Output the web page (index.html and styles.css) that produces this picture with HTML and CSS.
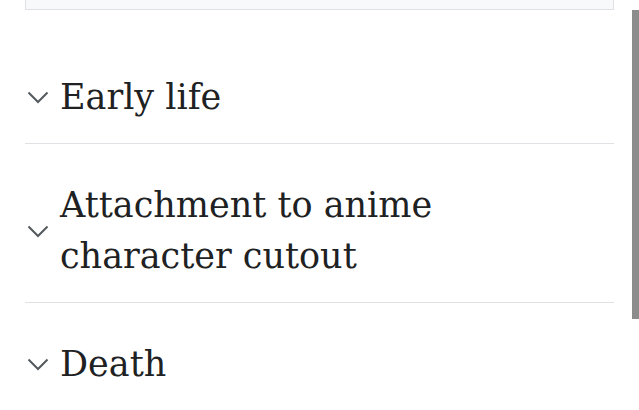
FILE: index.html
```html
<!DOCTYPE html>
<html lang="en">
<head>
<meta charset="utf-8">
<link rel="stylesheet" href="styles.css">
</head>
<body>
<div class="page">
  <div class="infobox"></div>
  <div class="sections">
    <div class="section">
      <svg class="chev" viewBox="0 0 22 13" width="22" height="13"><path d="M1.5 1.5 L11 11 L20.5 1.5" fill="none" stroke="#54595d" stroke-width="2"/></svg>
      <h2 class="title">Early life</h2>
    </div>
    <div class="section">
      <svg class="chev" viewBox="0 0 22 13" width="22" height="13"><path d="M1.5 1.5 L11 11 L20.5 1.5" fill="none" stroke="#54595d" stroke-width="2"/></svg>
      <h2 class="title">Attachment to anime<br>character cutout</h2>
    </div>
    <div class="section last">
      <svg class="chev" viewBox="0 0 22 13" width="22" height="13"><path d="M1.5 1.5 L11 11 L20.5 1.5" fill="none" stroke="#54595d" stroke-width="2"/></svg>
      <h2 class="title">Death</h2>
    </div>
  </div>
</div>
<div class="scrollbar"></div>
</body>
</html>
```
FILE: styles.css
```css
html, body {
  margin: 0;
  padding: 0;
  background: #fff;
  overflow: hidden;
}
.page {
  padding: 0 25px;
  width: 589px;
}
.infobox {
  height: 9px;
  background: #f8f9fa;
  border: 1px solid #dfe1e5;
  border-top: none;
}
.sections {
  margin-top: 26px;
}
.section {
  display: flex;
  align-items: center;
  padding: 36px 0 20px;
  border-bottom: 1px solid #dfe1e5;
}
.section.last {
  border-bottom: none;
}
.chev {
  display: block;
  margin-left: 2px;
  margin-right: 11px;
  flex: none;
}
.title {
  margin: 0;
  font-family: "DejaVu Serif", "Liberation Serif", serif;
  font-weight: normal;
  font-size: 35px;
  line-height: 51px;
  color: #202122;
}
.scrollbar {
  position: fixed;
  left: 632px;
  top: 10px;
  width: 7px;
  height: 309px;
  background: #8c8c8c;
}
```
